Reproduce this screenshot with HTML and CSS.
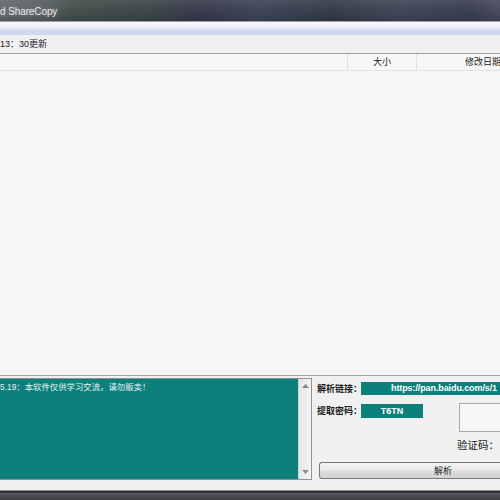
FILE: index.html
```html
<!DOCTYPE html>
<html lang="zh">
<head>
<meta charset="utf-8">
<title>ShareCopy</title>
<link rel="stylesheet" href="styles.css">
</head>
<body>
<div class="window">
  <div class="titlebar"><span class="title">d ShareCopy</span></div>
  <div class="menubar"></div>
  <div class="toolbar"><span class="status">13：30更新</span></div>
  <div class="list">
    <div class="list-header">
      <div class="col col-name"></div>
      <div class="col col-size">大小</div>
      <div class="col col-date">修改日期</div>
    </div>
    <div class="list-body"></div>
  </div>
  <div class="panel">
    <div class="log">
      <div class="log-text">5.19：本软件仅供学习交流，请勿贩卖！</div>
      <div class="scrollbar">
        <svg class="arrow" width="7" height="4" viewBox="0 0 7 4"><path d="M0 4 L3.5 0 L7 4 Z" fill="#8a8a8a"/></svg>
        <svg class="arrow" width="7" height="4" viewBox="0 0 7 4"><path d="M0 0 L3.5 4 L7 0 Z" fill="#8a8a8a"/></svg>
      </div>
    </div>
    <div class="form">
      <div class="row row-link">
        <span class="label">解析链接：</span>
        <span class="field field-link">https://pan.baidu.com/s/1</span>
      </div>
      <div class="row row-code">
        <span class="label">提取密码：</span>
        <span class="field field-code">T6TN</span>
        <div class="captcha"></div>
      </div>
      <div class="captcha-label">验证码：</div>
      <button class="btn">解析</button>
    </div>
  </div>
  <div class="taskbar"></div>
</div>
</body>
</html>
```

FILE: styles.css
```css
html, body {
  margin: 0;
  padding: 0;
  width: 500px;
  height: 500px;
  overflow: hidden;
  background: #f0f0f0;
}

.window {
  width: 500px;
  height: 500px;
  overflow: hidden;
  display: flex;
  flex-direction: column;
  font-family: "Liberation Sans", "Noto Sans CJK SC", sans-serif;
  color: #1a1a1a;
}

.titlebar {
  height: 21px;
  flex: none;
  display: flex;
  align-items: center;
  background:
    linear-gradient(180deg, rgba(255,255,255,0.08) 0, rgba(0,0,0,0) 60%, rgba(0,0,0,0.15) 100%),
    linear-gradient(90deg, #63676c 0, #5a6065 40px, #44504d 70px, #3c4848 140px, #383b4c 200px, #3d4656 260px, #343c4a 330px, #404656 400px, #3a3f50 470px, #474b5c 500px);
}

.title {
  font-size: 10px;
  color: #e6e8ea;
  text-shadow: 0 0 4px rgba(255,255,255,0.35);
  letter-spacing: -0.1px;
  padding-top: 1px;
}

.menubar {
  height: 14px;
  flex: none;
  background: linear-gradient(180deg, #f7f8fb 0, #eef1f8 40%, #d6ddf1 60%, #cdd5ee 100%);
  border-top: 1px solid #9aa0aa;
  box-sizing: border-box;
}

.toolbar {
  height: 19px;
  flex: none;
  box-sizing: border-box;
  border-bottom: 1px solid #a0a0a0;
  background: #f0f0f0;
  display: flex;
  align-items: center;
}

.status {
  font-size: 9px;
  line-height: 12px;
}

.list {
  flex: none;
  display: flex;
  flex-direction: column;
  border-bottom: 1px solid #a2a2a2;
}

.list-header {
  height: 17px;
  box-sizing: border-box;
  display: flex;
  background: #f7f7f7;
  border-bottom: 1px solid #e3e3e3;
}

.col {
  font-size: 9px;
  line-height: 16px;
  color: #222;
  box-sizing: border-box;
  white-space: nowrap;
  overflow: hidden;
}

.col-name { width: 348px; border-right: 1px solid #e2e2e2; }
.col-size { width: 69px; border-right: 1px solid #e2e2e2; text-align: center; }
.col-date { flex: 1; padding-left: 48px; }

.list-body {
  height: 304px;
  background: #f6f6f6;
}

.panel {
  height: 114px;
  flex: none;
  display: flex;
  background: #f0f0f0;
}

.log {
  width: 312px;
  height: 102px;
  margin-top: 2px;
  box-sizing: border-box;
  border: 1px solid #8e9298;
  border-left: none;
  display: flex;
  flex: none;
}

.log-text {
  flex: 1;
  background: #0d807b;
  color: #e8f4f3;
  font-size: 8.4px;
  line-height: 12px;
  padding-top: 2px;
  white-space: nowrap;
  overflow: hidden;
}

.scrollbar {
  width: 12px;
  background: linear-gradient(90deg, #e6e6e6, #f4f4f4);
  border-left: 1px solid #cfcfcf;
  display: flex;
  flex-direction: column;
  justify-content: space-between;
  align-items: center;
  padding: 5px 0 5px;
}

.arrow { display: block; }

.form {
  flex: 1;
  min-width: 0;
  display: flex;
  flex-direction: column;
  padding-left: 5px;
}

.row {
  display: flex;
  align-items: flex-start;
}

.row-link {
  margin-top: 6px;
  height: 13px;
}

.label {
  width: 44px;
  flex: none;
  font-size: 9px;
  line-height: 13px;
  font-weight: 700;
  color: #1c1c1c;
  white-space: nowrap;
  font-family: "Noto Sans CJK SC", sans-serif;
}

.field {
  background: #0d807b;
  color: #ffffff;
  font-weight: 700;
  font-size: 9px;
  line-height: 13px;
  white-space: nowrap;
  overflow: hidden;
}

.field-link {
  flex: 1;
  min-width: 0;
  height: 13px;
  padding-left: 30px;
  letter-spacing: -0.1px;
}

.row-code {
  margin-top: 8px;
  height: 29px;
}

.row-code .label {
  margin-top: 1px;
}

.field-code {
  width: 62px;
  flex: none;
  height: 14px;
  margin-top: 1px;
  line-height: 14px;
  text-align: center;
}

.captcha {
  flex: 1;
  height: 29px;
  margin-left: 36px;
  box-sizing: border-box;
  border: 1px solid #a8a8a8;
  border-right: none;
  background: #f6f6f6;
}

.captcha-label {
  margin-top: 6px;
  margin-left: 140px;
  font-size: 10.5px;
  line-height: 14px;
  color: #1a1a1a;
  white-space: nowrap;
  font-family: "Noto Sans CJK SC", sans-serif;
}

.btn {
  margin-top: 10px;
  margin-left: 2px;
  height: 17px;
  padding: 0 0 0 114px;
  text-align: left;
  border: 1px solid #7a7a7a;
  border-right: none;
  border-radius: 3px 0 0 3px;
  background: linear-gradient(180deg, #f4f4f4 0, #ebebeb 45%, #dcdcdc 55%, #d2d2d2 100%);
  font-family: "Noto Sans CJK SC", sans-serif;
  font-size: 9px;
  line-height: 15px;
  color: #222;
}

.taskbar {
  flex: 1;
  background: linear-gradient(180deg, #8a8a8a 0, #8a8a8a 1px, #2e2e30 1px, #2e2e30 3px, #5c5c62 3px, #4a4a52 6px, #3e3e44 100%);
}
```
